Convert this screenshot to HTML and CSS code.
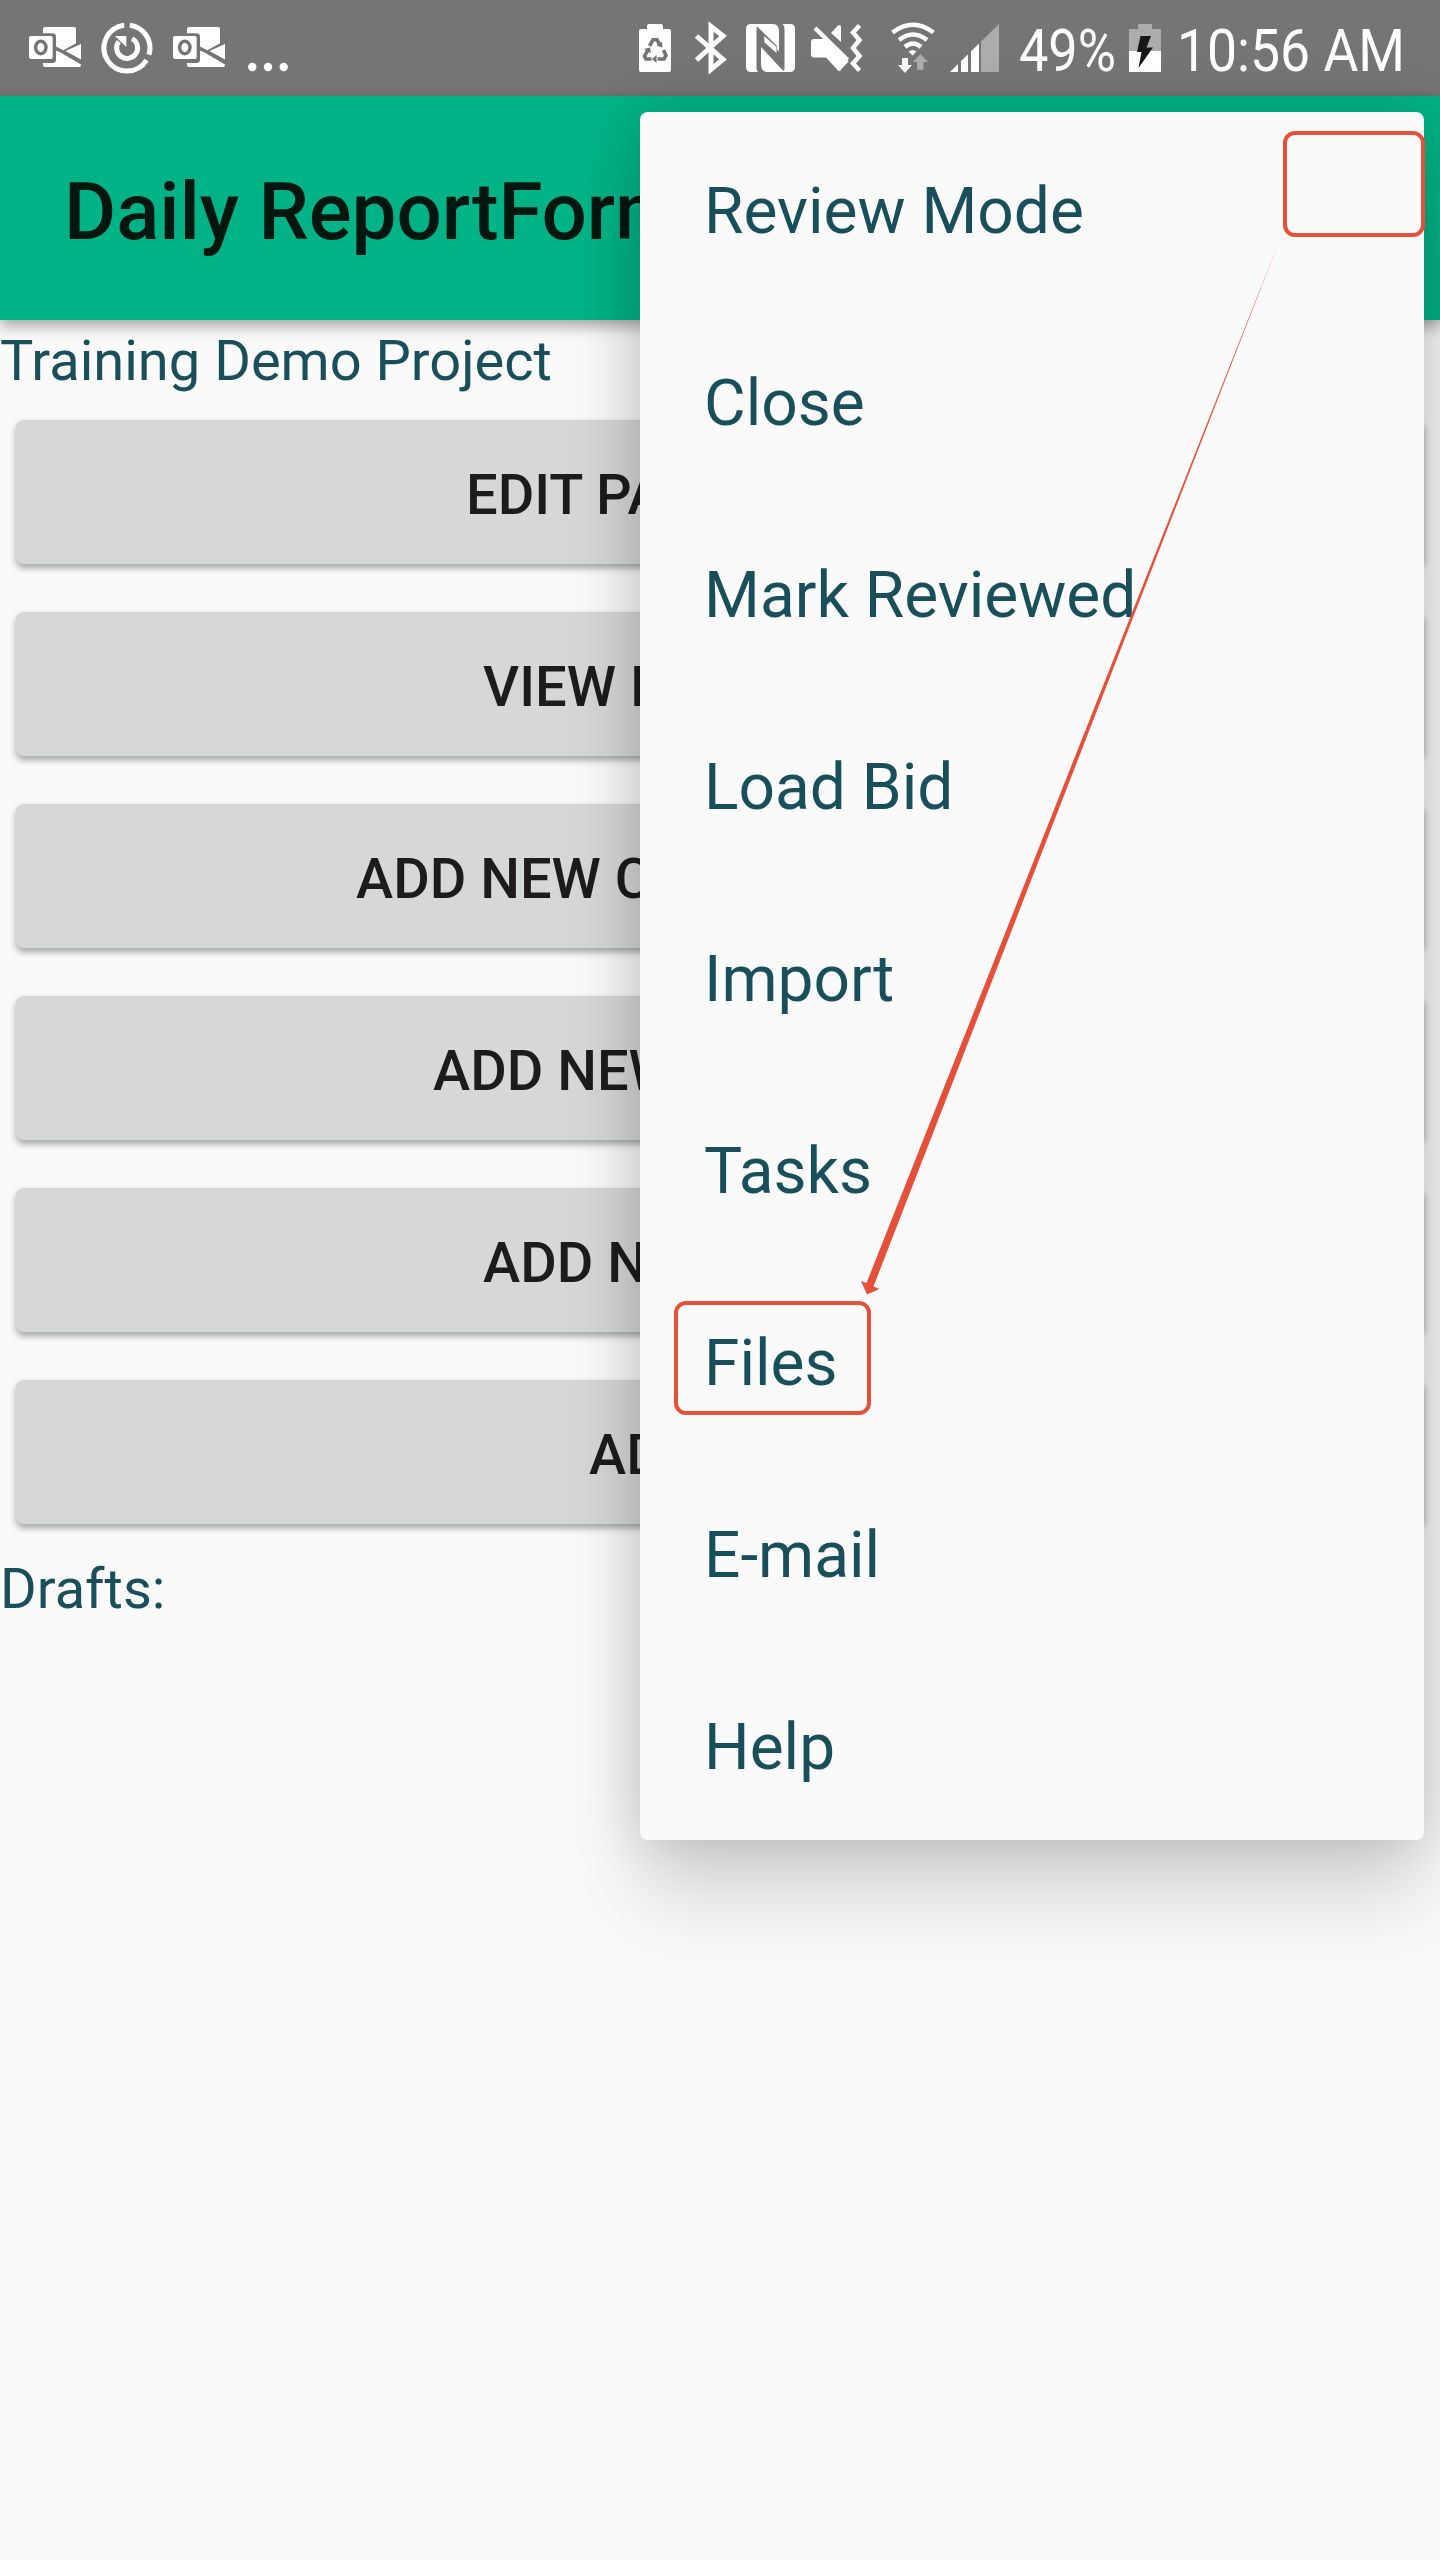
FILE: index.html
```html
<!DOCTYPE html>
<html lang="en">
<head>
    <meta charset="UTF-8">
    <meta name="viewport" content="width=device-width, initial-scale=1.0">
    <title>Daily ReportForm</title>
    <link rel="stylesheet" href="styles.css">
</head>
<body>

    <div class="statusbar">
        <div class="notifications">
            <svg class="outlook" width="52" height="40" viewBox="0 0 52 40">
                <path d="M14 2Q14 0 16 0H45Q47 0 47 2V16.3L34.3 23.2L27 19.5V10Q27 6.3 23.5 6.3H14Z"/>
                <path d="M36.5 24L52 17V32.5Z"/>
                <path d="M14 36H23.5Q27 36 27 32.5V23.5L31.5 25.5L52 37.5Q52 40 50 40H16Q14 40 14 38Z"/>
                <rect y="9" width="23.7" height="23" rx="2"/>
                <ellipse class="cut" cx="11.8" cy="20.5" rx="5.2" ry="6.2"/>
            </svg>
            <svg class="sync" width="52" height="52" viewBox="-26 -26 52 52">
                <path class="line" d="M2.8 -22.8A23 23 0 0 1 22 6.7M19.6 12A23 23 0 1 1 -2.8 -22.8"/>
                <path class="line" d="M5 -9.4A10.5 10.5 0 1 1 -8.2 -6.5"/>
                <path d="M-12 -12H-0.7V-1Z"/>
            </svg>
            <svg class="outlook" width="52" height="40" viewBox="0 0 52 40">
                <path d="M14 2Q14 0 16 0H45Q47 0 47 2V16.3L34.3 23.2L27 19.5V10Q27 6.3 23.5 6.3H14Z"/>
                <path d="M36.5 24L52 17V32.5Z"/>
                <path d="M14 36H23.5Q27 36 27 32.5V23.5L31.5 25.5L52 37.5Q52 40 50 40H16Q14 40 14 38Z"/>
                <rect y="9" width="23.7" height="23" rx="2"/>
                <ellipse class="cut" cx="11.8" cy="20.5" rx="5.2" ry="6.2"/>
            </svg>
            <svg class="more" width="40" height="48" viewBox="0 0 40 48">
                <circle cx="4.3" cy="43" r="4.2"/>
                <circle cx="20" cy="43" r="4.2"/>
                <circle cx="35.7" cy="43" r="4.2"/>
            </svg>
        </div>

        <div class="system">
            <svg class="saver" width="32" height="48" viewBox="0 0 32 48">
                <path d="M8 5V2Q8 0 10 0H22Q24 0 24 2V5H30Q32 5 32 7V46Q32 48 30 48H2Q0 48 0 46V7Q0 5 2 5Z"/>
                <path class="recycle" d="M10.5 22L14 15.8H18L21 21M24.5 26L27 31.5L25 35H18.5M12.5 35H7L5.5 32L9 26"/>
                <path class="gray" d="M23.5 23.5L17.5 21.5L23 18ZM17.5 31V39L13 35ZM5 25L11 23.5L12 29Z"/>
            </svg>
            <svg class="bluetooth" width="33" height="50" viewBox="0 0 33 50">
                <path class="line" d="M2.5 13L29 36.5L17 46.5V3.5L29 13L2.5 37"/>
            </svg>
            <svg class="nfc" width="49" height="48" viewBox="0 0 49 48">
                <path d="M5 0H27Q33 0 33 8V27.5L10.5 3V44Q10.5 47 12.5 48H5Q0 48 0 43V5Q0 0 5 0Z"/>
                <path d="M36.5 0H44Q49 0 49 5V43Q49 48 44 48H22Q15 48 15 40V19L38.5 46V5Q38.5 1.5 36.5 0Z"/>
                <path class="gray" d="M10.5 2L31 22V29L18 16V21L38 45V47L34.5 44L15 23V15Z"/>
                <path d="M18.5 18.5L30.5 29V23L18 12Z"/>
            </svg>
            <svg class="mute" width="51" height="48" viewBox="0 0 51 48">
                <path d="M3 15H13L38 37L30 45.5Q29 48 27 46.5L15 33.5H3Q0 33.5 0 30.5V18Q0 15 3 15Z"/>
                <path d="M20 9L27 1.5Q30 0 30 3V18Z"/>
                <path class="gap" d="M6 2.5L41 36"/>
                <path class="slash" d="M4 4L36.5 36"/>
                <path class="wave" d="M48.5 1.5L42 8.5L48.5 16L42 24L48.5 32L42 39.5L48.5 46.5"/>
            </svg>
            <svg class="wifi" width="44" height="50" viewBox="0 0 44 50">
                <path class="arc" d="M1.5 9.5Q22 -6 42.5 9.5M8 17Q22 6 36 17M14 24Q22 17 30 24"/>
                <path d="M21.5 32.5L17.5 28.5Q21.5 25.5 25.5 28.5Z"/>
                <path d="M11 35H17V42H21L14 50L7 42H11Z"/>
                <path class="dim" d="M26 47V39H22L29.5 31L37 39H32.5V47Z"/>
            </svg>
            <svg class="signal" width="49" height="48" viewBox="0 0 49 48">
                <path d="M0 48L8 40V48ZM11 37L18 30.5V48H11ZM21 27.5L29 19.5V48H21Z"/>
                <path class="dim" d="M31 17.5L49 0V48H31Z"/>
            </svg>
            <svg class="percent" width="97" height="60" viewBox="0 0 97 60">
                <text x="-1" y="53" textLength="97" lengthAdjust="spacingAndGlyphs">49%</text>
            </svg>
            <svg class="battery" width="32" height="48" viewBox="0 0 32 48">
                <path class="dim" d="M9 0H23V5H32V27H0V5H9Z"/>
                <path d="M0 27H32V48H0Z"/>
                <path class="bolt" d="M11.5 12H22L17.5 23.5H24L9.5 44L12.5 28H8Z"/>
            </svg>
            <svg class="clock" width="226" height="60" viewBox="0 0 226 60">
                <text x="-3" y="53" textLength="228" lengthAdjust="spacingAndGlyphs">10:56 AM</text>
            </svg>
        </div>
    </div>

    <div class="toolbar">
        <h1>Daily ReportForm</h1>
    </div>

    <div class="content">
        <p class="label">Training Demo Project</p>
        <div class="buttons">
            <button class="edit">EDIT PA</button>
            <button class="view">VIEW I</button>
            <button class="add-c">ADD NEW C</button>
            <button class="add-new">ADD NEW</button>
            <button class="add-n">ADD N</button>
            <button class="ad">AD</button>
        </div>
        <p class="label">Drafts:</p>
    </div>

    <div class="menu">
        <a>Review Mode</a>
        <a>Close</a>
        <a>Mark Reviewed</a>
        <a>Load Bid</a>
        <a>Import</a>
        <a>Tasks</a>
        <a>Files</a>
        <a>E-mail</a>
        <a>Help</a>
    </div>

    <!-- red callouts: overflow button to Files -->
    <div class="callout callout-more"></div>
    <div class="callout callout-files"></div>
    <svg class="arrow" width="430" height="1060" viewBox="0 0 430 1060">
        <path d="M420 4L6.5 1048L1 1046L7 1059.5L19.5 1054L13.5 1051.5Z"/>
    </svg>

</body>
</html>
```
FILE: styles.css
```css
* {
    box-sizing: border-box;
}

body {
    font-family: Roboto, sans-serif;
    margin: 0;
    padding: 0;
    background-color: #fafafa;
    color: #194e5b;
    width: 1440px;
    height: 2560px;
    position: relative;
    overflow: hidden;
}

svg {
    display: block;
    flex: none;
    fill: white;
    overflow: visible;
}

/* status bar */
.statusbar {
    display: flex;
    justify-content: space-between;
    height: 96px;
    padding: 0 34px 0 29px;
    background-color: #757575;
}

.notifications,
.system {
    display: flex;
    align-items: center;
}

.statusbar text {
    font-size: 60px;
}

.cut {
    fill: white;
    stroke: #757575;
    stroke-width: 3.4;
}

.gray {
    fill: #757575;
}

.dim {
    fill: #acacac;
}

.bolt {
    fill: #171717;
}

.line {
    fill: none;
    stroke: white;
    stroke-width: 5;
}

.recycle {
    fill: none;
    stroke: #757575;
    stroke-width: 3.6;
}

.gap {
    stroke: #757575;
    stroke-width: 6;
}

.slash,
.wave,
.arc {
    fill: none;
    stroke: white;
    stroke-width: 4.5;
}

.outlook {
    margin-bottom: 2px;
}

.sync {
    margin: 0 20px;
}

.more {
    margin-left: 23px;
}

.bluetooth {
    margin-left: 23px;
}

.nfc {
    margin-left: 19px;
}

.mute {
    margin-left: 16px;
}

.wifi {
    margin-left: 29px;
}

.signal {
    margin-left: 15px;
}

.percent {
    margin-left: 21px;
}

.battery {
    margin-left: 12px;
}

.clock {
    margin-left: 19px;
}

/* app bar */
.toolbar {
    display: flex;
    align-items: center;
    height: 224px;
    padding: 8px 64px 0;
    background-color: #00b386;
    box-shadow: 0 6px 14px rgba(0, 0, 0, 0.35);
}

.toolbar h1 {
    margin: 0;
    font-size: 80px;
    font-weight: 500;
    letter-spacing: -0.1px;
    color: #00170f;
    white-space: nowrap;
}

.label {
    margin: 0;
    height: 74px;
    line-height: 82px;
    font-size: 56px;
}

.buttons {
    display: flex;
    flex-direction: column;
    gap: 48px;
    padding: 26px 16px 24px;
}

.buttons button {
    height: 144px;
    padding-top: 6px;
    padding-bottom: 0;
    border: 0;
    border-radius: 8px;
    background-color: #d6d8d7;
    box-shadow: 0 4px 7px rgba(0, 0, 0, 0.35);
    color: #1c1c1c;
    font-family: Roboto, sans-serif;
    font-size: 56px;
    font-weight: 500;
    text-align: left;
}

.edit {
    padding-left: 450px;
}

.view {
    padding-left: 467px;
}

.add-c {
    padding-left: 340px;
}

.add-new {
    padding-left: 417px;
}

.add-n {
    padding-left: 467px;
}

.ad {
    padding-left: 573px;
}

/* overflow menu */
.menu {
    position: absolute;
    top: 112px;
    left: 640px;
    width: 784px;
    border-radius: 8px;
    background-color: #fafafa;
    box-shadow: 0 60px 84px rgba(0, 0, 0, 0.14), 0 0 56px rgba(0, 0, 0, 0.16);
}

.menu a {
    display: block;
    height: 192px;
    padding-left: 64px;
    line-height: 199px;
    font-size: 64px;
}

.callout {
    position: absolute;
    border: 4px solid #e5503b;
    border-radius: 12px;
}

.callout-more {
    top: 131px;
    left: 1283px;
    width: 142px;
    height: 106px;
}

.callout-files {
    top: 1301px;
    left: 674px;
    width: 197px;
    height: 114px;
}

.arrow {
    position: absolute;
    top: 235px;
    left: 860px;
    fill: #e5503b;
}
```
